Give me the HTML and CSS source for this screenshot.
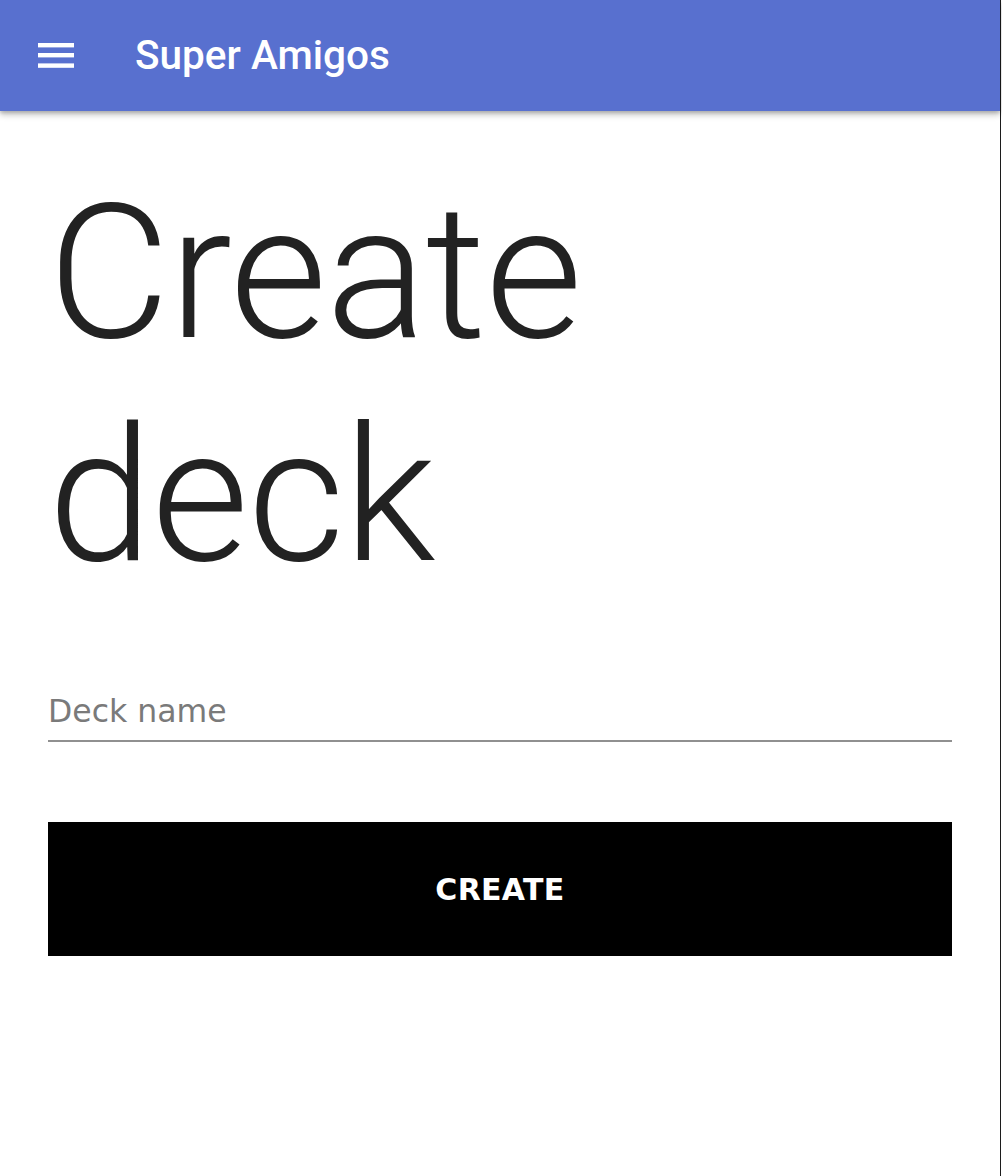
FILE: index.html
```html
<!DOCTYPE html>
<html lang="en">
<head>
<meta charset="utf-8">
<title>Super Amigos</title>
<link rel="stylesheet" href="styles.css">
</head>
<body>
<div class="page">
  <header class="appbar">
    <button class="menu" aria-label="Menu">
      <svg width="36" height="25" viewBox="0 0 36 25" aria-hidden="true">
        <rect x="0" y="0" width="36" height="4.4" fill="#fff"/>
        <rect x="0" y="10" width="36" height="4.4" fill="#fff"/>
        <rect x="0" y="20.4" width="36" height="4.4" fill="#fff"/>
      </svg>
    </button>
    <h2 class="appbar-title">Super Amigos</h2>
  </header>
  <main class="content">
    <h1 class="heading">Create<br>deck</h1>
    <input class="field" type="text" placeholder="Deck name">
    <button class="create-btn">CREATE</button>
  </main>
</div>
</body>
</html>
```

FILE: styles.css
```css
html, body {
  margin: 0;
  padding: 0;
  background: #ffffff;
}

.page {
  width: 1000px;
  min-height: 1176px;
  border-right: 1px solid #1c1c1c;
  background: #ffffff;
}

.appbar {
  height: 111px;
  background: #5870cf;
  display: flex;
  align-items: center;
  padding-left: 38px;
  box-shadow: 0 4px 6px rgba(0, 0, 0, 0.22), 0 2px 3px rgba(0, 0, 0, 0.14);
  position: relative;
}

.menu {
  border: 0;
  padding: 0;
  margin: 0;
  background: transparent;
  display: flex;
  width: 36px;
  height: 25px;
}

.appbar-title {
  margin: 0 0 0 61px;
  font-family: Roboto, "Liberation Sans", sans-serif;
  font-weight: 500;
  font-size: 40.5px;
  color: #ffffff;
  line-height: 1;
}

.content {
  padding: 0 48px;
  display: flex;
  flex-direction: column;
}

.heading {
  margin: 51px 0 0;
  font-family: Roboto, "Liberation Sans", sans-serif;
  font-weight: 300;
  font-size: 188px;
  line-height: 223px;
  color: #222222;
  letter-spacing: -1px;
}

.field {
  margin: 79px 0 0;
  padding: 6px 0 10px 0;
  border: 0;
  border-bottom: 2px solid #909090;
  outline: none;
  font-family: "DejaVu Sans", "Open Sans", sans-serif;
  font-size: 31.5px;
  line-height: 37px;
  height: 37px;
  color: #333333;
  background: transparent;
}

.field::placeholder {
  color: #7a7a7a;
  opacity: 1;
}

.create-btn {
  margin-top: 80px;
  height: 134px;
  border: 0;
  background: #000000;
  color: #ffffff;
  font-family: "DejaVu Sans", "Open Sans", sans-serif;
  font-weight: 700;
  font-size: 30px;
  letter-spacing: 0.3px;
  display: flex;
  align-items: center;
  justify-content: center;
  padding: 0;
}
```
